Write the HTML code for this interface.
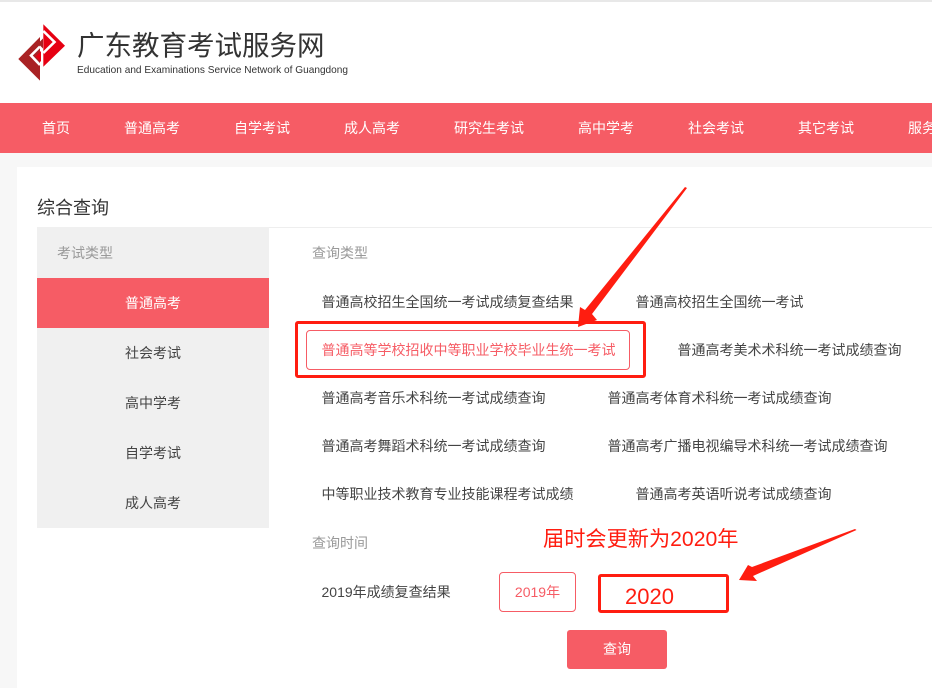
<!DOCTYPE html>
<html lang="zh-CN"><head><meta charset="utf-8"><title>广东教育考试服务网</title>
<style>
html,body{margin:0;padding:0}
body{width:932px;height:688px;position:relative;overflow:hidden;background:#f7f7f7;font-family:"Liberation Sans","Noto Sans CJK SC",sans-serif;font-size:14px;color:#444}
.a{position:absolute;white-space:nowrap}
.t{position:absolute;white-space:nowrap;line-height:20px;height:20px}
.n{color:#fff;top:118px}
.s{left:37px;width:232px;text-align:center}
.g{color:#999}
</style></head><body>
<div class="a" style="left:0;top:0;width:932px;height:103px;background:#fff;border-top:2px solid #e8e8e8;box-sizing:border-box"></div>
<svg class="a" style="left:0;top:0" width="80" height="90" viewBox="0 0 80 90">
<path d="M43.300 24.300L65 45.700L43.300 66.700Z" fill="#e60012"/>
<path d="M40 37L18.300 59L40 80.600Z" fill="#a92224"/>
<path d="M43.300 31L54.500 42L43.300 53" fill="none" stroke="#fff" stroke-width="2.600"/>
<path d="M40 46.500L31 55.500L40 65" fill="none" stroke="#fff" stroke-width="2.600"/>
<path d="M35.500 56.500L41 51V62Z" fill="#e60012"/>
<path d="M38 43.500L43 38.500V48.500Z" fill="#a92224"/>
</svg>
<div class="a" style="left:77px;top:27px;font-size:27.500px;line-height:38px;color:#333">广东教育考试服务网</div>
<div class="a" style="left:77px;top:64px;font-size:10.100px;line-height:14px;color:#333">Education and Examinations Service Network of Guangdong</div>

<div class="a" style="left:0;top:103px;width:932px;height:50px;background:#f65c65"></div>
<div class="t n" style="left:42px">首页</div>
<div class="t n" style="left:124px">普通高考</div>
<div class="t n" style="left:234px">自学考试</div>
<div class="t n" style="left:344px">成人高考</div>
<div class="t n" style="left:454px">研究生考试</div>
<div class="t n" style="left:578px">高中学考</div>
<div class="t n" style="left:688px">社会考试</div>
<div class="t n" style="left:798px">其它考试</div>
<div class="t n" style="left:908px">服务</div>

<div class="a" style="left:17px;top:167px;width:915px;height:521px;background:#fff"></div>
<div class="a" style="left:37px;top:195px;font-size:18px;line-height:26px;color:#333">综合查询</div>
<div class="a" style="left:37px;top:227px;width:895px;height:1px;background:#eee"></div>
<div class="a" style="left:37px;top:227px;width:232px;height:301px;background:#f0f0f0"></div>
<div class="a" style="left:37px;top:278px;width:232px;height:50px;background:#f65c65"></div>
<div class="t g" style="left:57px;top:243px">考试类型</div>
<div class="t s" style="top:293px;color:#fff">普通高考</div>
<div class="t s" style="top:343px">社会考试</div>
<div class="t s" style="top:393px">高中学考</div>
<div class="t s" style="top:443px">自学考试</div>
<div class="t s" style="top:493px">成人高考</div>

<div class="t g" style="left:312px;top:243px">查询类型</div>
<div class="t" style="left:321.500px;top:292px">普通高校招生全国统一考试成绩复查结果</div>
<div class="t" style="left:635.500px;top:292px">普通高校招生全国统一考试</div>
<div class="a" style="left:306px;top:330px;width:324px;height:40px;box-sizing:border-box;border:1px solid #f65c65;border-radius:4px"></div>
<div class="t" style="left:321.500px;top:340px;color:#f65c65">普通高等学校招收中等职业学校毕业生统一考试</div>
<div class="t" style="left:677.500px;top:340px">普通高考美术术科统一考试成绩查询</div>
<div class="t" style="left:321.500px;top:388px">普通高考音乐术科统一考试成绩查询</div>
<div class="t" style="left:607.500px;top:388px">普通高考体育术科统一考试成绩查询</div>
<div class="t" style="left:321.500px;top:436px">普通高考舞蹈术科统一考试成绩查询</div>
<div class="t" style="left:607.500px;top:436px">普通高考广播电视编导术科统一考试成绩查询</div>
<div class="t" style="left:321.500px;top:484px">中等职业技术教育专业技能课程考试成绩</div>
<div class="t" style="left:635.500px;top:484px">普通高考英语听说考试成绩查询</div>

<div class="t g" style="left:312px;top:533px">查询时间</div>
<div class="t" style="left:321.500px;top:582px">2019年成绩复查结果</div>
<div class="a" style="left:499px;top:572px;width:77px;height:40px;box-sizing:border-box;border:1px solid #f65c65;border-radius:4px;color:#f65c65;text-align:center;line-height:38px">2019年</div>
<div class="a" style="left:567px;top:630px;width:100px;height:39px;background:#f65c65;border-radius:3px;color:#fff;text-align:center;line-height:39px">查询</div>

<div class="a" style="left:295px;top:321px;width:351px;height:57px;box-sizing:border-box;border:3px solid #ff1d10;border-radius:3px"></div>
<div class="a" style="left:598px;top:574px;width:131px;height:39px;box-sizing:border-box;border:3px solid #ff1d10;border-radius:3px"></div>
<div class="a" style="left:625px;top:582px;font-size:22px;line-height:30px;color:#ff1d10">2020</div>
<div class="a" style="left:543px;top:525px;font-size:21.200px;line-height:30px;color:#ff1d10">届时会更新为2020年</div>
<svg class="a" style="left:0;top:0" width="932" height="688">
<path d="M687 188L592 314L597 320L578 327L580 307L585 310L685 187Z" fill="#ff1d10"/>
<path d="M856.500 530L753 576L757 581L739 580L748 565L752 567L855 529Z" fill="#ff1d10"/>
</svg>
</body></html>
